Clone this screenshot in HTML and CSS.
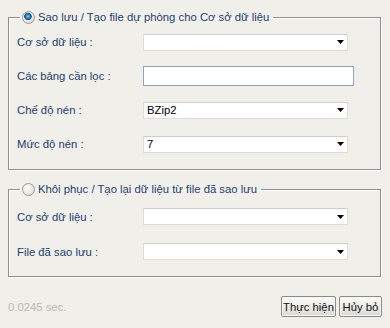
FILE: index.html
```html
<!DOCTYPE html>
<html lang="vi">
<head>
    <meta charset="UTF-8">
    <title>Sao lưu / Khôi phục</title>
    <link rel="stylesheet" href="styles.css">
</head>
<body>
    <div class="page">
        <fieldset class="group group-backup">
            <legend>
                <label class="legend-option">
                    <input type="radio" name="mode" checked>
                    <span>Sao lưu / Tạo file dự phòng cho Cơ sở dữ liệu</span>
                </label>
            </legend>

            <div class="row">
                <span class="row-label">Cơ sở dữ liệu :</span>
                <div class="select"><span class="select-value"></span><svg class="arrow" width="7" height="4" viewBox="0 0 7 4"><path d="M0 0H7L3.5 4Z" fill="#000"/></svg></div>
            </div>

            <div class="row">
                <span class="row-label">Các bảng cần lọc :</span>
                <div class="text-input"></div>
            </div>

            <div class="row">
                <span class="row-label">Chế độ nén :</span>
                <div class="select"><span class="select-value">BZip2</span><svg class="arrow" width="7" height="4" viewBox="0 0 7 4"><path d="M0 0H7L3.5 4Z" fill="#000"/></svg></div>
            </div>

            <div class="row">
                <span class="row-label">Mức độ nén :</span>
                <div class="select"><span class="select-value">7</span><svg class="arrow" width="7" height="4" viewBox="0 0 7 4"><path d="M0 0H7L3.5 4Z" fill="#000"/></svg></div>
            </div>
        </fieldset>

        <fieldset class="group group-restore">
            <legend>
                <label class="legend-option">
                    <input type="radio" name="mode">
                    <span>Khôi phục / Tạo lại dữ liệu từ file đã sao lưu</span>
                </label>
            </legend>

            <div class="row">
                <span class="row-label">Cơ sở dữ liệu :</span>
                <div class="select"><span class="select-value"></span><svg class="arrow" width="7" height="4" viewBox="0 0 7 4"><path d="M0 0H7L3.5 4Z" fill="#000"/></svg></div>
            </div>

            <div class="row">
                <span class="row-label">File đã sao lưu :</span>
                <div class="select"><span class="select-value"></span><svg class="arrow" width="7" height="4" viewBox="0 0 7 4"><path d="M0 0H7L3.5 4Z" fill="#000"/></svg></div>
            </div>
        </fieldset>

        <div class="footer">
            <span class="timing">0.0245 sec.</span>
            <div class="buttons">
                <button type="button" class="btn btn-run">Thực hiện</button>
                <button type="button" class="btn btn-cancel">Hủy bỏ</button>
            </div>
        </div>
    </div>
</body>
</html>
```

FILE: styles.css
```css
body {
    margin: 0;
    background-color: #f1efe9;
    font-family: 'Liberation Sans', Arial, sans-serif;
    font-size: 11.3px;
    color: #21406e;
}

.page {
    padding: 10px 9px 0 8px;
}

.group {
    margin: 0;
    padding: 1px 0 8px 8px;
    border: 1px solid #8f8f8a;
    box-shadow: inset 1px 1px 0 #ffffff, 1px 1px 0 #ffffff;
    min-width: 0;
}

.group-restore {
    margin-top: 12px;
    padding-top: 3px;
    padding-bottom: 7px;
}

legend {
    margin-left: 3px;
    padding: 0 4px 0 2px;
    line-height: 14px;
}

.legend-option {
    display: flex;
    align-items: center;
    gap: 3px;
}

.legend-option input {
    appearance: none;
    -webkit-appearance: none;
    margin: 0;
    width: 13px;
    height: 13px;
    border-radius: 50%;
    border: 1px solid #9a9a94;
    background: radial-gradient(circle at 40% 35%, #ffffff 0, #e9e8e2 55%, #cfcec8 100%);
    box-sizing: border-box;
}

.legend-option input:checked {
    background:
        radial-gradient(circle at 45% 40%, #8fd0f5 0, #2a7fc0 2px, #124c86 3.5px, transparent 4px),
        radial-gradient(circle at 40% 35%, #ffffff 0, #e9e8e2 55%, #cfcec8 100%);
}

.row {
    display: flex;
    align-items: center;
    height: 34px;
}

.group-restore .row {
    height: 35px;
}

.row-label {
    width: 126px;
    flex-shrink: 0;
}

.select {
    width: 205px;
    height: 17px;
    box-sizing: border-box;
    background-color: #ffffff;
    border: 1px solid #dedcd4;
    border-top-color: #cfcdc4;
    display: flex;
    align-items: center;
    justify-content: space-between;
    padding: 0 3px 0 3px;
    color: #000;
}

.text-input {
    width: 211px;
    height: 20px;
    box-sizing: border-box;
    background-color: #ffffff;
    border: 1px solid #8ea6c2;
}

.footer {
    display: flex;
    align-items: center;
    justify-content: space-between;
    margin-top: 19px;
    margin-right: -1px;
}

.timing {
    color: #b8b8b4;
}

.buttons {
    display: flex;
    gap: 3px;
}

.btn {
    height: 21px;
    padding: 0;
    white-space: nowrap;
    font-family: inherit;
    font-size: 11.3px;
    color: #111;
    border: 1px solid #8a8a86;
    border-radius: 2px;
    background: linear-gradient(#fbfbf8, #e6e5df 70%, #d8d7d0);
    box-shadow: inset 0 0 0 1px #f6f6f2;
}

.btn-run {
    width: 55px;
}

.btn-cancel {
    width: 43px;
}
```
